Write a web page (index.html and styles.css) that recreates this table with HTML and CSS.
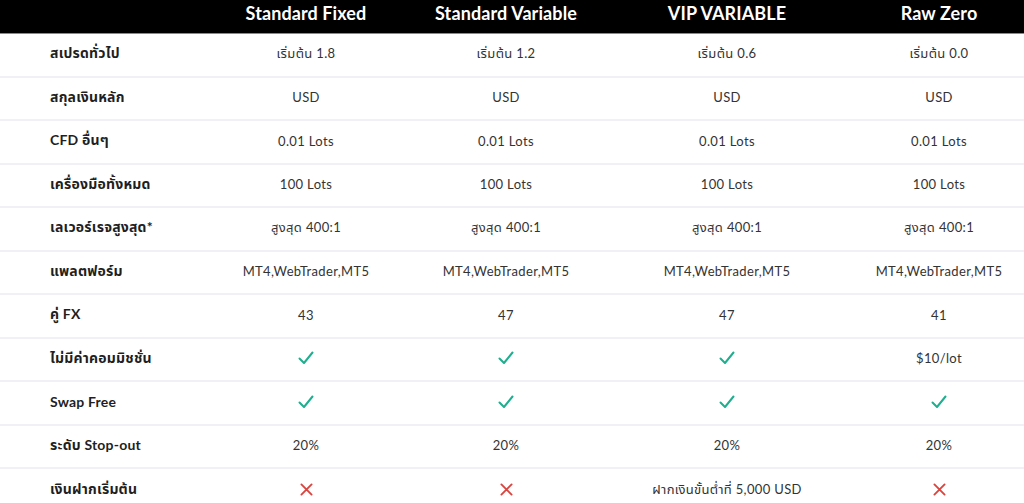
FILE: index.html
```html
<!DOCTYPE html>
<html lang="th">
<head>
<meta charset="utf-8">
<title>Account comparison</title>
<link rel="stylesheet" href="styles.css">
</head>
<body>
<div class="table">
  <div class="row head">
    <div class="cell label"></div>
    <div class="cell">Standard Fixed</div>
    <div class="cell">Standard Variable</div>
    <div class="cell">VIP VARIABLE</div>
    <div class="cell">Raw Zero</div>
  </div>
  <div class="row">
    <div class="cell label">สเปรดทั่วไป</div>
    <div class="cell">เริ่มต้น 1.8</div>
    <div class="cell">เริ่มต้น 1.2</div>
    <div class="cell">เริ่มต้น 0.6</div>
    <div class="cell">เริ่มต้น 0.0</div>
  </div>
  <div class="row">
    <div class="cell label">สกุลเงินหลัก</div>
    <div class="cell">USD</div>
    <div class="cell">USD</div>
    <div class="cell">USD</div>
    <div class="cell">USD</div>
  </div>
  <div class="row">
    <div class="cell label">CFD อื่นๆ</div>
    <div class="cell">0.01 Lots</div>
    <div class="cell">0.01 Lots</div>
    <div class="cell">0.01 Lots</div>
    <div class="cell">0.01 Lots</div>
  </div>
  <div class="row">
    <div class="cell label">เครื่องมือทั้งหมด</div>
    <div class="cell">100 Lots</div>
    <div class="cell">100 Lots</div>
    <div class="cell">100 Lots</div>
    <div class="cell">100 Lots</div>
  </div>
  <div class="row">
    <div class="cell label">เลเวอร์เรจสูงสุด*</div>
    <div class="cell">สูงสุด 400:1</div>
    <div class="cell">สูงสุด 400:1</div>
    <div class="cell">สูงสุด 400:1</div>
    <div class="cell">สูงสุด 400:1</div>
  </div>
  <div class="row">
    <div class="cell label">แพลตฟอร์ม</div>
    <div class="cell">MT4,WebTrader,MT5</div>
    <div class="cell">MT4,WebTrader,MT5</div>
    <div class="cell">MT4,WebTrader,MT5</div>
    <div class="cell">MT4,WebTrader,MT5</div>
  </div>
  <div class="row">
    <div class="cell label">คู่ FX</div>
    <div class="cell">43</div>
    <div class="cell">47</div>
    <div class="cell">47</div>
    <div class="cell">41</div>
  </div>
  <div class="row">
    <div class="cell label">ไม่มีค่าคอมมิชชั่น</div>
    <div class="cell"><svg class="ok" viewBox="0 0 16 14"><path d="M1.5 7.5 L6 12 L14.5 1.5"/></svg></div>
    <div class="cell"><svg class="ok" viewBox="0 0 16 14"><path d="M1.5 7.5 L6 12 L14.5 1.5"/></svg></div>
    <div class="cell"><svg class="ok" viewBox="0 0 16 14"><path d="M1.5 7.5 L6 12 L14.5 1.5"/></svg></div>
    <div class="cell">$10/lot</div>
  </div>
  <div class="row">
    <div class="cell label">Swap Free</div>
    <div class="cell"><svg class="ok" viewBox="0 0 16 14"><path d="M1.5 7.5 L6 12 L14.5 1.5"/></svg></div>
    <div class="cell"><svg class="ok" viewBox="0 0 16 14"><path d="M1.5 7.5 L6 12 L14.5 1.5"/></svg></div>
    <div class="cell"><svg class="ok" viewBox="0 0 16 14"><path d="M1.5 7.5 L6 12 L14.5 1.5"/></svg></div>
    <div class="cell"><svg class="ok" viewBox="0 0 16 14"><path d="M1.5 7.5 L6 12 L14.5 1.5"/></svg></div>
  </div>
  <div class="row">
    <div class="cell label">ระดับ Stop-out</div>
    <div class="cell">20%</div>
    <div class="cell">20%</div>
    <div class="cell">20%</div>
    <div class="cell">20%</div>
  </div>
  <div class="row">
    <div class="cell label">เงินฝากเริ่มต้น</div>
    <div class="cell"><svg class="no" viewBox="0 0 14 14"><path d="M1.5 1.5 L12.5 12.5 M12.5 1.5 L1.5 12.5"/></svg></div>
    <div class="cell"><svg class="no" viewBox="0 0 14 14"><path d="M1.5 1.5 L12.5 12.5 M12.5 1.5 L1.5 12.5"/></svg></div>
    <div class="cell">ฝากเงินขั้นต่ำที่ 5,000 USD</div>
    <div class="cell"><svg class="no" viewBox="0 0 14 14"><path d="M1.5 1.5 L12.5 12.5 M12.5 1.5 L1.5 12.5"/></svg></div>
  </div>
</div>
</body>
</html>
```

FILE: styles.css
```css
html, body {
  margin: 0;
  padding: 0;
  background: #ffffff;
}
body {
  font-family: Lato, "Noto Sans Thai", "Noto Sans", sans-serif;
  font-size: 13px;
  letter-spacing: 0.35px;
  color: #333333;
  overflow: hidden;
}
.table {
  display: flex;
  flex-direction: column;
}
.row {
  display: grid;
  grid-template-columns: 200px 212px 188px 254px 170px;
  height: 43.5px;
  box-sizing: border-box;
  border-bottom: 2px solid #f1f1f5;
}
.row.head {
  height: 34px;
  background: #000000;
  color: #ffffff;
  font-size: 18px;
  font-weight: 700;
  letter-spacing: 0.1px;
  border-bottom: 1px solid #8a8a8a;
}
.row.head .cell {
  padding-bottom: 8px;
}
.row:last-child {
  border-bottom: none;
}
.cell {
  display: flex;
  align-items: center;
  justify-content: center;
  white-space: nowrap;
  padding-bottom: 2px;
}
.cell.label {
  justify-content: flex-start;
  padding-left: 50px;
  font-size: 14px;
  letter-spacing: 0.2px;
  font-weight: 700;
  color: #1f1f1f;
}
.ok {
  width: 16px;
  height: 14px;
  fill: none;
  stroke: #1fae8e;
  stroke-width: 2;
  stroke-linecap: round;
  stroke-linejoin: round;
}
.no {
  width: 13px;
  height: 13px;
  fill: none;
  stroke: #d9443f;
  stroke-width: 2;
  stroke-linecap: round;
}
```
